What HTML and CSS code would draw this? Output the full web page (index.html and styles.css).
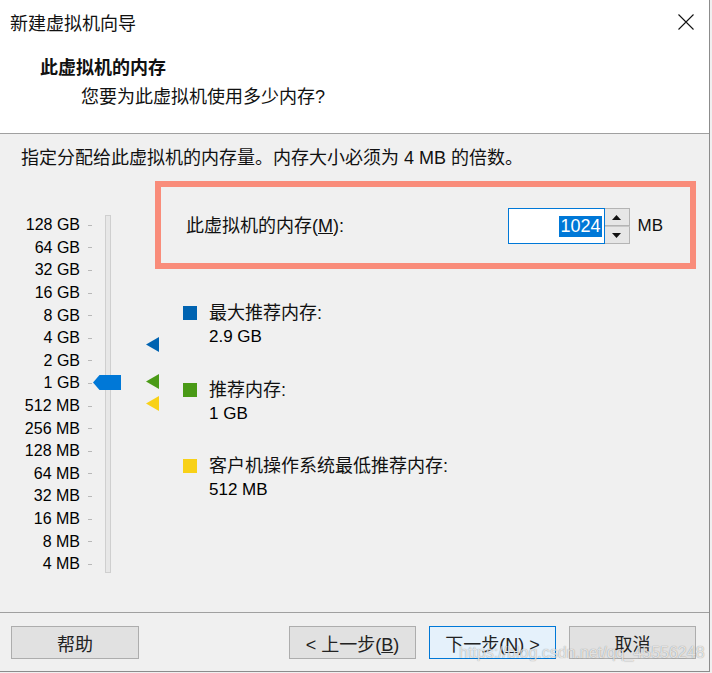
FILE: index.html
```html
<!DOCTYPE html>
<html lang="zh-CN">
<head>
  <meta charset="UTF-8">
  <meta name="viewport" content="width=device-width, initial-scale=1.0">
  <title>新建虚拟机向导</title>
  <link rel="stylesheet" href="styles.css">
</head>
<body>

  <div class="window">

    <header class="header">
      <div class="titlebar">
        <span class="title">新建虚拟机向导</span>
        <svg class="close" width="16" height="16" viewBox="0 0 16 16">
          <path d="M0.5 0.5L15.5 15.5M15.5 0.5L0.5 15.5" stroke="#111" stroke-width="1.1" fill="none"/>
        </svg>
      </div>
      <h1 class="heading">此虚拟机的内存</h1>
      <p class="subheading">您要为此虚拟机使用多少内存?</p>
    </header>

    <p class="intro">指定分配给此虚拟机的内存量。内存大小必须为 4 MB 的倍数。</p>

    <main class="main">
      <!-- memory slider -->
      <div class="scale">
        <ul class="scale-list">
          <li><span class="scale-label">128 GB</span><span class="tick"></span></li>
          <li><span class="scale-label">64 GB</span><span class="tick"></span></li>
          <li><span class="scale-label">32 GB</span><span class="tick"></span></li>
          <li><span class="scale-label">16 GB</span><span class="tick"></span></li>
          <li><span class="scale-label">8 GB</span><span class="tick"></span></li>
          <li><span class="scale-label">4 GB</span><span class="tick"></span></li>
          <li><span class="scale-label">2 GB</span><span class="tick"></span></li>
          <li><span class="scale-label">1 GB</span><span class="tick"></span></li>
          <li><span class="scale-label">512 MB</span><span class="tick"></span></li>
          <li><span class="scale-label">256 MB</span><span class="tick"></span></li>
          <li><span class="scale-label">128 MB</span><span class="tick"></span></li>
          <li><span class="scale-label">64 MB</span><span class="tick"></span></li>
          <li><span class="scale-label">32 MB</span><span class="tick"></span></li>
          <li><span class="scale-label">16 MB</span><span class="tick"></span></li>
          <li><span class="scale-label">8 MB</span><span class="tick"></span></li>
          <li><span class="scale-label">4 MB</span><span class="tick"></span></li>
        </ul>
        <div class="track"></div>

        <svg class="thumb" width="28" height="15" viewBox="0 0 28 15">
          <polygon points="0,7.5 6.5,0 28,0 28,15 6.5,15" fill="#0078d7"/>
        </svg>
        <svg class="marker marker-max" width="13" height="15" viewBox="0 0 13 15">
          <polygon points="0,7.5 13,0 13,15" fill="#0063b1"/>
        </svg>
        <svg class="marker marker-rec" width="13" height="15" viewBox="0 0 13 15">
          <polygon points="0,7.5 13,0 13,15" fill="#4a9a16"/>
        </svg>
        <svg class="marker marker-min" width="13" height="15" viewBox="0 0 13 15">
          <polygon points="0,7.5 13,0 13,15" fill="#f8d117"/>
        </svg>
      </div>

      <div class="settings">
        <div class="mem-box">
          <label class="mem-label">此虚拟机的内存(<u>M</u>):</label>
          <div class="spin">
            <div class="spin-input"><span class="sel">1024</span></div>
            <div class="spin-buttons">
              <span class="spin-btn">
                <svg width="9" height="5" viewBox="0 0 9 5"><polygon points="0,5 4.5,0 9,5" fill="#111"/></svg>
              </span>
              <span class="spin-btn">
                <svg width="9" height="5" viewBox="0 0 9 5"><polygon points="0,0 9,0 4.5,5" fill="#111"/></svg>
              </span>
            </div>
            <span class="unit">MB</span>
          </div>
        </div>

        <ul class="legend">
          <li class="legend-item">
            <span class="swatch swatch-max"></span>
            <div>
              <div class="legend-name">最大推荐内存:</div>
              <div class="legend-value">2.9 GB</div>
            </div>
          </li>
          <li class="legend-item">
            <span class="swatch swatch-rec"></span>
            <div>
              <div class="legend-name">推荐内存:</div>
              <div class="legend-value">1 GB</div>
            </div>
          </li>
          <li class="legend-item">
            <span class="swatch swatch-min"></span>
            <div>
              <div class="legend-name">客户机操作系统最低推荐内存:</div>
              <div class="legend-value">512 MB</div>
            </div>
          </li>
        </ul>
      </div>
    </main>

    <footer class="footer">
      <button class="btn btn-help">帮助</button>
      <div class="nav-buttons">
        <button class="btn">&lt; 上一步(<u>B</u>)</button>
        <button class="btn btn-default">下一步(<u>N</u>) &gt;</button>
        <button class="btn">取消</button>
      </div>
      <span class="watermark">https://blog.csdn.net/qq_45556248</span>
    </footer>

  </div>

</body>
</html>
```

FILE: styles.css
```css
body {
  margin: 0;
  padding: 0;
  background-color: #f0f0f0;
  font-family: "Liberation Sans", "Noto Sans CJK SC", sans-serif;
  color: #111;
}

.window {
  width: 709px;
  height: 671px;
  border-right: 1px solid #8c8c8c;
  border-bottom: 1px solid #8c8c8c;
  background-color: #f0f0f0;
  position: relative;
}

/* header */

.header {
  height: 134px;
  box-sizing: border-box;
  background-color: #fff;
  border-bottom: 1px solid #a0a0a0;
}

.titlebar {
  height: 44px;
  display: flex;
  align-items: center;
  justify-content: space-between;
  padding: 0 15px 0 10px;
}

.title {
  font-size: 18px;
}

.heading {
  margin: 12px 0 0 40px;
  font-size: 18px;
  line-height: 24px;
  font-weight: bold;
}

.subheading {
  margin: 5px 0 0 81px;
  font-size: 18px;
  line-height: 24px;
}

.intro {
  margin: 0;
  padding: 12px 0 0 21px;
  font-size: 18px;
  line-height: 24px;
}

/* main area */

.main {
  height: 442px;
  display: flex;
}

.scale {
  width: 155px;
  flex-shrink: 0;
  display: flex;
  align-items: flex-start;
  padding-top: 44px;
  box-sizing: border-box;
  position: relative;
}

.scale-list {
  list-style: none;
  margin: 0;
  padding: 0;
}

.scale-list li {
  height: 22.6px;
  display: flex;
  align-items: center;
}

.scale-label {
  width: 80px;
  text-align: right;
  font-size: 16px;
  line-height: 20px;
  color: #000;
}

.tick {
  width: 4px;
  height: 1px;
  margin-left: 8px;
  background-color: #b8b8b8;
}

.track {
  width: 4px;
  height: 356px;
  margin: 1px 0 0 13px;
  background-color: #e7e7e7;
  border: 1px solid #cfcfcf;
}

.thumb {
  position: absolute;
  left: 93px;
  top: 205px;
}

.marker {
  position: absolute;
  left: 146px;
}

.marker-max { top: 167px; }
.marker-rec { top: 204px; }
.marker-min { top: 226px; }

.settings {
  flex: 1;
  padding-top: 11px;
}

.mem-box {
  width: 541px;
  height: 88px;
  box-sizing: border-box;
  border: 6px solid #f98c7a;
  display: flex;
  align-items: center;
  padding: 2px 27px 0 25px;
}

.mem-label {
  font-size: 18px;
  line-height: 24px;
}

.spin {
  margin-left: auto;
  display: flex;
  align-items: center;
}

.spin-input {
  width: 97px;
  height: 36px;
  box-sizing: border-box;
  border: 1px solid #0078d7;
  background-color: #fff;
  display: flex;
  align-items: center;
  justify-content: flex-end;
  padding-right: 2px;
}

.sel {
  background-color: #0078d7;
  color: #fff;
  font-size: 18px;
  line-height: 21px;
  padding: 0 1px;
}

.spin-buttons {
  width: 25px;
  height: 36px;
  display: flex;
  flex-direction: column;
}

.spin-btn {
  flex: 1;
  display: flex;
  align-items: center;
  justify-content: center;
  background-color: #e6e6e6;
  border: 1px solid #b4b4b4;
  border-left: none;
}

.spin-btn + .spin-btn {
  border-top: 1px solid #c8c8c8;
}

.unit {
  margin-left: 8px;
  font-size: 17px;
}

.legend {
  list-style: none;
  margin: 32px 0 0 0;
  padding: 0 0 0 28px;
}

.legend-item {
  display: flex;
  align-items: flex-start;
  margin-bottom: 28.6px;
}

.swatch {
  width: 14px;
  height: 14px;
  margin: 5px 12px 0 0;
}

.swatch-max { background-color: #0063b1; }
.swatch-rec { background-color: #4a9a16; }
.swatch-min { background-color: #f8d117; }

.legend-name {
  font-size: 18px;
  line-height: 24px;
}

.legend-value {
  font-size: 17px;
  line-height: 24px;
  color: #000;
}

/* footer buttons */

.footer {
  border-top: 1px solid #a0a0a0;
  padding-top: 13px;
  display: flex;
  align-items: flex-start;
  position: relative;
}

.btn {
  width: 127px;
  height: 33px;
  padding: 0;
  font-family: inherit;
  font-size: 18px;
  color: #222;
  background-color: #e1e1e1;
  border: 1px solid #adadad;
}

.btn-help {
  width: 128px;
  margin-left: 11px;
}

.btn-default {
  background-color: #e5f1fb;
  border-color: #0078d7;
}

.nav-buttons {
  margin-left: auto;
  margin-right: 13px;
  display: flex;
  gap: 13px;
}

.watermark {
  position: absolute;
  left: 459px;
  top: 31px;
  font-size: 16px;
  line-height: 18px;
  color: rgba(255, 255, 255, 0.75);
  text-shadow: 0 0 1px rgba(0, 0, 0, 0.45);
  pointer-events: none;
}
```
